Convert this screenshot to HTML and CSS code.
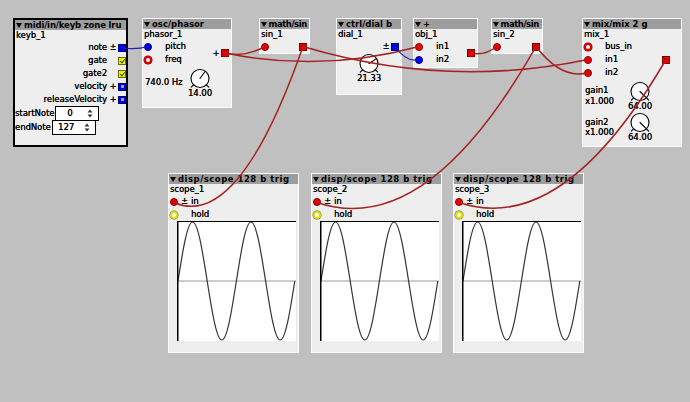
FILE: index.html
```html
<!DOCTYPE html>
<html>
<head>
<meta charset="utf-8">
<title>Patch</title>
<link rel="stylesheet" href="styles.css">
</head>
<body>
<div class="patch">

  <div class="obj sel n-keyb">
    <div class="hdr"><i class="tri"></i>midi/in/keyb zone lru</div>
    <div class="name">keyb_1</div>
    <div class="outs">
      <div class="orow"><span class="olbl">note</span><span class="omk">±</span><span class="sq blue"></span></div>
      <div class="orow"><span class="olbl">gate</span><span class="omk"></span><span class="sq bool"></span></div>
      <div class="orow"><span class="olbl">gate2</span><span class="omk"></span><span class="sq bool"></span></div>
      <div class="orow"><span class="olbl">velocity</span><span class="omk">+</span><span class="sq blue int"></span></div>
      <div class="orow"><span class="olbl">releaseVelocity</span><span class="omk">+</span><span class="sq blue int"></span></div>
    </div>
    <div class="spinrow"><span class="slbl">startNote</span><span class="spin"><span class="sval">0</span><svg class="arr" width="6" height="9" viewBox="0 0 6 9"><path d="M0.5 3.6 L3 0.6 L5.5 3.6 Z M0.5 5.4 L3 8.4 L5.5 5.4 Z"/></svg></span></div>
    <div class="spinrow"><span class="slbl">endNote</span><span class="spin"><span class="sval">127</span><svg class="arr" width="6" height="9" viewBox="0 0 6 9"><path d="M0.5 3.6 L3 0.6 L5.5 3.6 Z M0.5 5.4 L3 8.4 L5.5 5.4 Z"/></svg></span></div>
  </div>

  <div class="obj n-phasor">
    <div class="hdr"><i class="tri"></i>osc/phasor</div>
    <div class="name">phasor_1</div>
    <div class="io">
      <div class="ins">
        <div class="irow"><span class="pin blue"></span><span class="imk"></span><span class="ilbl">pitch</span></div>
        <div class="irow"><span class="pin ring-red"></span><span class="imk"></span><span class="ilbl">freq</span></div>
      </div>
      <div class="outs">
        <div class="orow"><span class="omk">+</span><span class="sq red"></span></div>
      </div>
    </div>
    <div class="prm">
      <div class="plbl">740.0 Hz</div>
      <div class="knob">
        <svg width="26" height="22" viewBox="0 0 26 22"><circle cx="13" cy="10.5" r="9"/><line x1="6.8" y1="16.7" x2="4.3" y2="19.2"/><line x1="19.2" y1="16.7" x2="21.7" y2="19.2"/><line x1="13" y1="10.5" x2="18.2" y2="3.3"/></svg>
        <span class="kval">14.00</span>
      </div>
    </div>
  </div>

  <div class="obj n-sin1">
    <div class="hdr narrow"><i class="tri"></i>math/sin</div>
    <div class="name">sin_1</div>
    <div class="io">
      <div class="ins"><div class="irow"><span class="pin red"></span></div></div>
      <div class="outs"><div class="orow"><span class="sq red"></span></div></div>
    </div>
  </div>

  <div class="obj n-dial">
    <div class="hdr"><i class="tri"></i>ctrl/dial b</div>
    <div class="name">dial_1</div>
    <div class="io">
      <div class="ins"></div>
      <div class="outs"><div class="orow"><span class="omk">±</span><span class="sq blue"></span></div></div>
    </div>
    <div class="knob center">
      <svg width="26" height="22" viewBox="0 0 26 22"><circle cx="13" cy="10.5" r="9"/><line x1="6.8" y1="16.7" x2="4.3" y2="19.2"/><line x1="19.2" y1="16.7" x2="21.7" y2="19.2"/><line x1="13" y1="10.5" x2="20.6" y2="5.6"/></svg>
      <span class="kval">21.33</span>
    </div>
  </div>

  <div class="obj n-plus">
    <div class="hdr"><i class="tri"></i>+</div>
    <div class="name">obj_1</div>
    <div class="io">
      <div class="ins">
        <div class="irow"><span class="pin red"></span><span class="imk"></span><span class="ilbl">in1</span></div>
        <div class="irow"><span class="pin blue"></span><span class="imk"></span><span class="ilbl">in2</span></div>
      </div>
      <div class="outs"><div class="orow"><span class="sq red"></span></div></div>
    </div>
  </div>

  <div class="obj n-sin2">
    <div class="hdr narrow"><i class="tri"></i>math/sin</div>
    <div class="name">sin_2</div>
    <div class="io">
      <div class="ins"><div class="irow"><span class="pin red"></span></div></div>
      <div class="outs"><div class="orow"><span class="sq red"></span></div></div>
    </div>
  </div>

  <div class="obj n-mix">
    <div class="hdr"><i class="tri"></i>mix/mix 2 g</div>
    <div class="name">mix_1</div>
    <div class="io">
      <div class="ins">
        <div class="irow"><span class="pin ring-red"></span><span class="imk"></span><span class="ilbl">bus_in</span></div>
        <div class="irow"><span class="pin red"></span><span class="imk"></span><span class="ilbl">in1</span></div>
        <div class="irow"><span class="pin red"></span><span class="imk"></span><span class="ilbl">in2</span></div>
      </div>
      <div class="outs mixout"><div class="orow"><span class="sq red"></span></div></div>
    </div>
    <div class="prm mixprm">
      <div class="plbl two">gain1<br>x1.000</div>
      <div class="knob">
        <svg width="26" height="22" viewBox="0 0 26 22"><circle cx="13" cy="10.5" r="9"/><line x1="6.8" y1="16.7" x2="4.3" y2="19.2"/><line x1="13" y1="10.5" x2="21.7" y2="19.2"/></svg>
        <span class="kval">64.00</span>
      </div>
    </div>
    <div class="prm mixprm">
      <div class="plbl two">gain2<br>x1.000</div>
      <div class="knob">
        <svg width="26" height="22" viewBox="0 0 26 22"><circle cx="13" cy="10.5" r="9"/><line x1="6.8" y1="16.7" x2="4.3" y2="19.2"/><line x1="13" y1="10.5" x2="21.7" y2="19.2"/></svg>
        <span class="kval">64.00</span>
      </div>
    </div>
  </div>

  <div class="obj scope n-sc1">
    <div class="hdr"><i class="tri"></i>disp/scope 128 b trig</div>
    <div class="name">scope_1</div>
    <div class="irow"><span class="pin red"></span><span class="imk">±</span><span class="ilbl">in</span></div>
    <div class="irow"><span class="pin ring-yel"></span><span class="imk"></span><span class="ilbl">hold</span></div>
    <svg class="plot" width="119" height="120" viewBox="0 0 119 120"><rect width="119" height="120" fill="#fff"/><line x1="0" y1="60" x2="119" y2="60" class="mid"/><path class="wave" d="M1,60 c4.76,-30.23 9.32,-59 14.6,-59 c5.28,0 9.84,28.77 14.6,59 c4.76,30.23 9.32,59 14.6,59 c5.28,0 9.84,-28.77 14.6,-59 c4.76,-30.23 9.32,-59 14.6,-59 c5.28,0 9.84,28.77 14.6,59 c4.76,30.23 9.32,59 14.6,59 c5.28,0 9.84,-28.77 14.6,-59"/><line x1="0.75" y1="0" x2="0.75" y2="120" class="edge"/><line x1="0" y1="0.5" x2="119" y2="0.5" class="edge top"/></svg>
  </div>

  <div class="obj scope n-sc2">
    <div class="hdr"><i class="tri"></i>disp/scope 128 b trig</div>
    <div class="name">scope_2</div>
    <div class="irow"><span class="pin red"></span><span class="imk">±</span><span class="ilbl">in</span></div>
    <div class="irow"><span class="pin ring-yel"></span><span class="imk"></span><span class="ilbl">hold</span></div>
    <svg class="plot" width="119" height="120" viewBox="0 0 119 120"><rect width="119" height="120" fill="#fff"/><line x1="0" y1="60" x2="119" y2="60" class="mid"/><path class="wave" d="M1,60 c4.76,-30.23 9.32,-59 14.6,-59 c5.28,0 9.84,28.77 14.6,59 c4.76,30.23 9.32,59 14.6,59 c5.28,0 9.84,-28.77 14.6,-59 c4.76,-30.23 9.32,-59 14.6,-59 c5.28,0 9.84,28.77 14.6,59 c4.76,30.23 9.32,59 14.6,59 c5.28,0 9.84,-28.77 14.6,-59"/><line x1="0.75" y1="0" x2="0.75" y2="120" class="edge"/><line x1="0" y1="0.5" x2="119" y2="0.5" class="edge top"/></svg>
  </div>

  <div class="obj scope n-sc3">
    <div class="hdr"><i class="tri"></i>disp/scope 128 b trig</div>
    <div class="name">scope_3</div>
    <div class="irow"><span class="pin red"></span><span class="imk">±</span><span class="ilbl">in</span></div>
    <div class="irow"><span class="pin ring-yel"></span><span class="imk"></span><span class="ilbl">hold</span></div>
    <svg class="plot" width="119" height="120" viewBox="0 0 119 120"><rect width="119" height="120" fill="#fff"/><line x1="0" y1="60" x2="119" y2="60" class="mid"/><path class="wave" d="M1,60 c4.76,-30.23 9.32,-59 14.6,-59 c5.28,0 9.84,28.77 14.6,59 c4.76,30.23 9.32,59 14.6,59 c5.28,0 9.84,-28.77 14.6,-59 c4.76,-30.23 9.32,-59 14.6,-59 c5.28,0 9.84,28.77 14.6,59 c4.76,30.23 9.32,59 14.6,59 c5.28,0 9.84,-28.77 14.6,-59"/><line x1="0.75" y1="0" x2="0.75" y2="120" class="edge"/><line x1="0" y1="0.5" x2="119" y2="0.5" class="edge top"/></svg>
  </div>

  <svg class="wires" width="690" height="402" viewBox="0 0 690 402">
    <path class="w blue" d="M121,47.5 Q134.5,50.3 148,46.5"/>
    <path class="w" d="M225,53 Q245,57.7 265,46.5"/>
    <path class="w" d="M225,53 Q322,73 419,46.5"/>
    <path class="w" d="M303,46.5 Q445.5,89.3 588,59.5"/>
    <path class="w" d="M303,46.5 Q238.5,231 174,202.5"/>
    <path class="w blue" d="M395,46.5 Q407,63.2 419,59.5"/>
    <path class="w" d="M471,53 Q484,56.3 497,46.5"/>
    <path class="w" d="M536,46.5 Q562,80.3 588,72.5"/>
    <path class="w" d="M536,46.5 Q426.5,240 317,202.5"/>
    <path class="w" d="M666,59.5 Q562.5,237.5 459,202.5"/>
  </svg>

</div>
</body>
</html>
```

FILE: styles.css
```css
* { box-sizing: border-box; }
html, body { margin: 0; padding: 0; }
body {
  background: #c0c0c0;
  font-family: "DejaVu Sans", "Liberation Sans", sans-serif;
  font-size: 8.4px;
  color: #000;
}
.patch { position: relative; width: 690px; height: 402px; overflow: hidden; }

/* object boxes on the free patch canvas */
.obj {
  position: absolute;
  background: #eeeeee;
  border: 1px solid #fafafa;
  display: flex;
  flex-direction: column;
  text-shadow: 0.25px 0 0 #000;
}
.obj.sel { border: 2px solid #000; }

.n-keyb   { left: 13px;  top: 18px;  width: 115px; height: 129px; }
.n-phasor { left: 142px; top: 18px;  width: 90px;  height: 90px; }
.n-sin1   { left: 259px; top: 18px;  width: 51px;  height: 36px; }
.n-dial   { left: 336px; top: 18px;  width: 66px;  height: 77px; }
.n-plus   { left: 413px; top: 18px;  width: 65px;  height: 50px; }
.n-sin2   { left: 491px; top: 18px;  width: 52px;  height: 36px; }
.n-mix    { left: 582px; top: 18px;  width: 100px; height: 129px; }
.n-sc1    { left: 168px; top: 173px; width: 131px; height: 180px; }
.n-sc2    { left: 311px; top: 173px; width: 131px; height: 180px; }
.n-sc3    { left: 453px; top: 173px; width: 131px; height: 180px; }

.hdr {
  flex: none;
  height: 10px;
  background: #9d9d9d;
  font-weight: bold;
  font-size: 8.5px;
  line-height: 10px;
  white-space: nowrap;
  overflow: hidden;
  display: flex;
  align-items: center;
  text-shadow: none;
}
.n-keyb .hdr { letter-spacing: -0.15px; }
.hdr.narrow { letter-spacing: -0.45px; }
.hdr.narrow .tri { margin-right: 1.5px; }
.scope .hdr { letter-spacing: 0.5px; }
.tri {
  flex: none;
  width: 0; height: 0;
  border-left: 3px solid transparent;
  border-right: 3px solid transparent;
  border-top: 5.5px solid #000;
  margin: 0 2px 0 1px;
}
.name { flex: none; height: 11px; line-height: 11px; padding-left: 1px; white-space: nowrap; }

/* inlets / outlets */
.io { display: flex; justify-content: space-between; align-items: center; flex: none; }
.ins, .outs { display: flex; flex-direction: column; }
.irow { height: 13px; display: flex; align-items: center; flex: none; }
.orow { height: 13px; display: flex; align-items: center; justify-content: flex-end; }
.pin {
  flex: none;
  width: 8px; height: 8px;
  border-radius: 50%;
  margin-left: 1px;
}
.pin.red { background: #ee0000; border: 1px solid #8a0000; }
.pin.blue { background: #0000ee; border: 1px solid #00007a; }
.pin.ring-red { background: #fff; border: 2px solid #e00000; box-shadow: 0 0 0 0.5px #700; }
.pin.ring-yel { background: #fff; border: 2px solid #e0e000; box-shadow: 0 0 0 0.5px #666; }
.imk { flex: none; width: 13px; text-align: center; line-height: 13px; }
.ilbl { white-space: nowrap; line-height: 13px; }
.olbl { white-space: nowrap; line-height: 13px; padding-right: 1px; }
.omk { flex: none; width: 10px; text-align: center; line-height: 13px; }
.sq {
  flex: none;
  position: relative;
  width: 8px; height: 8px;
  margin-right: 2px;
}
.n-keyb .sq { margin-right: 0; }
.sq.red { background: #ee0000; border: 1px solid #7a0000; }
.sq.red::after {
  content: ""; position: absolute; left: 1px; top: 1px; width: 4px; height: 4px;
  border: 1px dotted #a00000;
}
.sq.blue { background: #0000e6; border: 1px solid #00006e; }
.sq.blue.int::after {
  content: ""; position: absolute; left: 1.5px; top: 1.5px; width: 3px; height: 3px;
  background: #9a9aff;
}
.sq.bool { background: #f2f200; border: 1px solid #6a6a00; }
.sq.bool::after {
  content: ""; position: absolute; left: 1.5px; top: 0.5px; width: 2px; height: 4px;
  border-right: 1px solid #444; border-bottom: 1px solid #444;
  transform: rotate(40deg);
}
.mixout { margin-right: 9px; }

/* keyb spinners */
.spinrow { display: flex; align-items: center; height: 14px; flex: none; }
.slbl { white-space: nowrap; padding-right: 1px; }
.spin {
  display: flex; align-items: center;
  width: 44px; height: 15px;
  background: #fff;
  border: 1px solid #000;
  border-top-width: 1.5px;
}
.sval { flex: 1; text-align: center; padding-right: 4px; }
.arr { margin-right: 5px; fill: #333; }

/* parameters & knobs */
.prm { display: flex; flex: none; }
.plbl { width: 44px; padding-left: 2px; padding-top: 12px; line-height: 9px; white-space: nowrap; flex: none; }
.plbl.two { padding-top: 6px; line-height: 10.5px; }
.knob { width: 26px; display: flex; flex-direction: column; align-items: center; flex: none; }
.knob svg { margin-top: 2px; overflow: visible; }
.knob.center { align-self: center; }
.knob.center svg { margin-top: 0; }
.mixprm .knob svg { margin-top: 1.5px; }
.knob circle { fill: #fff; stroke: #000; stroke-width: 1.1; }
.knob line { stroke: #000; stroke-width: 1.1; stroke-linecap: round; }
.kval { line-height: 9px; margin-top: -1px; white-space: nowrap; }

/* scope plot */
.plot { display: block; margin-left: 8px; flex: none; }
.plot .mid { stroke: #9a9a9a; stroke-width: 1; }
.plot .wave { fill: none; stroke: #333; stroke-width: 1.2; }
.plot .edge { stroke: #000; stroke-width: 1.5; }
.plot .edge.top { stroke-width: 1; }

/* wires overlay */
.wires { position: absolute; left: 0; top: 0; pointer-events: none; }
.w { fill: none; stroke: #a52222; stroke-width: 1.5; }
.w.blue { stroke: #1c1cc8; stroke-width: 1.2; }
```
